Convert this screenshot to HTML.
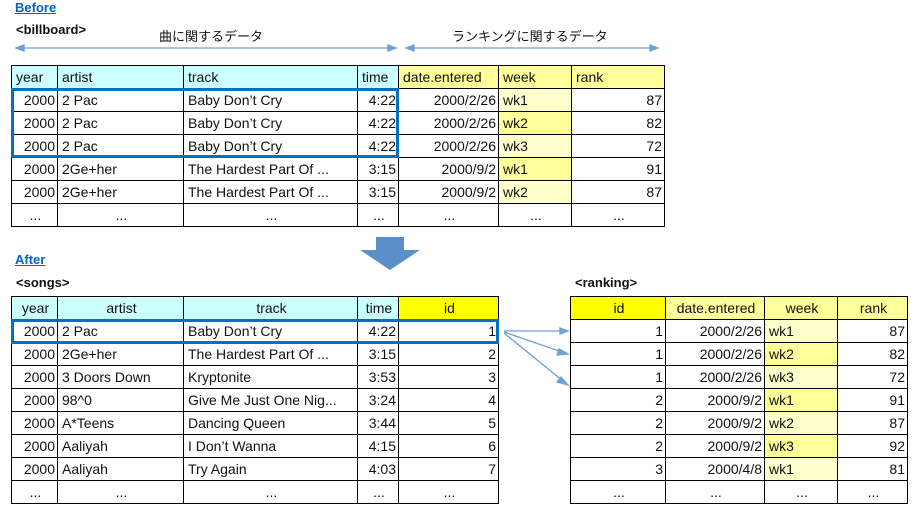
<!DOCTYPE html>
<html><head><meta charset="utf-8"><style>
body{margin:0;width:915px;height:517px;background:#fff;position:relative;overflow:hidden;font-family:"Liberation Sans","Noto Sans CJK JP",sans-serif;font-size:14px;color:#111}
.a{position:absolute}
table{position:absolute;border-collapse:collapse;table-layout:fixed}
td{border:1px solid #000;height:22px;padding:0 2px 0 4px;white-space:nowrap;overflow:hidden;line-height:22px}
.c{background:#ccffff}.y{background:#ffff00}.ly{background:#ffff99}.w1{background:#ffffcc}.w2{background:#ffff99}
.r{text-align:right}.m{text-align:center}
.h{font-weight:bold;color:#0563c1;text-decoration:underline;font-size:13px}
.b{font-weight:bold;font-size:13px}
.box{position:absolute;border:3px solid #0070c0;box-sizing:border-box}
</style></head><body>
<div class="a h" style="left:15px;top:0px">Before</div>
<div class="a b" style="left:16px;top:22px">&lt;billboard&gt;</div>
<div class="a" style="left:159px;top:26px;font-size:13px">曲に関するデータ</div>
<div class="a" style="left:452px;top:26px;font-size:13px">ランキングに関するデータ</div>
<div class="a h" style="left:15px;top:252px">After</div>
<div class="a b" style="left:16px;top:275px">&lt;songs&gt;</div>
<div class="a b" style="left:575px;top:275px">&lt;ranking&gt;</div>
<svg class="a" style="left:0;top:0" width="915" height="517">
<g stroke="#6fa0d6" stroke-width="1.3" fill="#6fa0d6">
<line x1="20" y1="48" x2="392" y2="48"/><polygon points="16,48 24,45 24,51"/><polygon points="396,48 388,45 388,51"/>
<line x1="410" y1="48" x2="654" y2="48"/><polygon points="406,48 414,45 414,51"/><polygon points="658,48 650,45 650,51"/>
<line x1="504" y1="331" x2="562" y2="331"/><polygon points="568,331 560,328 560,334"/>
<line x1="504" y1="332" x2="562" y2="352"/><polygon points="568,354 559,349 557,355"/>
<line x1="504" y1="333" x2="563" y2="381"/><polygon points="568,385 561,377 557,382"/>
</g>
<polygon points="376,237 404,237 404,250 420,250 390,270 360,250 376,250" fill="#5b8fc9"/>
</svg>
<table style="left:11px;top:65px">
<colgroup><col style="width:46px"><col style="width:126px"><col style="width:174px"><col style="width:41px"><col style="width:100px"><col style="width:73px"><col style="width:93px"></colgroup>
<tr><td class="c">year</td><td class="c">artist</td><td class="c">track</td><td class="c">time</td><td class="ly">date.entered</td><td class="ly">week</td><td class="ly">rank</td></tr>
<tr><td class="r">2000</td><td>2 Pac</td><td>Baby Don’t Cry</td><td class="r">4:22</td><td class="r">2000/2/26</td><td class="w1">wk1</td><td class="r">87</td></tr>
<tr><td class="r">2000</td><td>2 Pac</td><td>Baby Don’t Cry</td><td class="r">4:22</td><td class="r">2000/2/26</td><td class="w2">wk2</td><td class="r">82</td></tr>
<tr><td class="r">2000</td><td>2 Pac</td><td>Baby Don’t Cry</td><td class="r">4:22</td><td class="r">2000/2/26</td><td class="w1">wk3</td><td class="r">72</td></tr>
<tr><td class="r">2000</td><td>2Ge+her</td><td>The Hardest Part Of ...</td><td class="r">3:15</td><td class="r">2000/9/2</td><td class="w2">wk1</td><td class="r">91</td></tr>
<tr><td class="r">2000</td><td>2Ge+her</td><td>The Hardest Part Of ...</td><td class="r">3:15</td><td class="r">2000/9/2</td><td class="w1">wk2</td><td class="r">87</td></tr>
<tr><td class="m">...</td><td class="m">...</td><td class="m">...</td><td class="m">...</td><td class="m">...</td><td class="m">...</td><td class="m">...</td></tr>
</table>
<div class="box" style="left:11px;top:88px;width:388px;height:70px"></div>
<table style="left:11px;top:296px">
<colgroup><col style="width:46px"><col style="width:126px"><col style="width:174px"><col style="width:41px"><col style="width:100px"></colgroup>
<tr><td class="c m">year</td><td class="c m">artist</td><td class="c m">track</td><td class="c m">time</td><td class="y m">id</td></tr>
<tr><td class="r">2000</td><td>2 Pac</td><td>Baby Don’t Cry</td><td class="r">4:22</td><td class="r">1</td></tr>
<tr><td class="r">2000</td><td>2Ge+her</td><td>The Hardest Part Of ...</td><td class="r">3:15</td><td class="r">2</td></tr>
<tr><td class="r">2000</td><td>3 Doors Down</td><td>Kryptonite</td><td class="r">3:53</td><td class="r">3</td></tr>
<tr><td class="r">2000</td><td>98^0</td><td>Give Me Just One Nig...</td><td class="r">3:24</td><td class="r">4</td></tr>
<tr><td class="r">2000</td><td>A*Teens</td><td>Dancing Queen</td><td class="r">3:44</td><td class="r">5</td></tr>
<tr><td class="r">2000</td><td>Aaliyah</td><td>I Don’t Wanna</td><td class="r">4:15</td><td class="r">6</td></tr>
<tr><td class="r">2000</td><td>Aaliyah</td><td>Try Again</td><td class="r">4:03</td><td class="r">7</td></tr>
<tr><td class="m">...</td><td class="m">...</td><td class="m">...</td><td class="m">...</td><td class="m">...</td></tr>
</table>
<div class="box" style="left:11px;top:319px;width:488px;height:25px"></div>
<table style="left:570px;top:296px">
<colgroup><col style="width:95px"><col style="width:99px"><col style="width:73px"><col style="width:70px"></colgroup>
<tr><td class="y m">id</td><td class="ly m">date.entered</td><td class="ly m">week</td><td class="ly m">rank</td></tr>
<tr><td class="r">1</td><td class="r">2000/2/26</td><td class="w1">wk1</td><td class="r">87</td></tr>
<tr><td class="r">1</td><td class="r">2000/2/26</td><td class="w2">wk2</td><td class="r">82</td></tr>
<tr><td class="r">1</td><td class="r">2000/2/26</td><td class="w1">wk3</td><td class="r">72</td></tr>
<tr><td class="r">2</td><td class="r">2000/9/2</td><td class="w2">wk1</td><td class="r">91</td></tr>
<tr><td class="r">2</td><td class="r">2000/9/2</td><td class="w1">wk2</td><td class="r">87</td></tr>
<tr><td class="r">2</td><td class="r">2000/9/2</td><td class="w2">wk3</td><td class="r">92</td></tr>
<tr><td class="r">3</td><td class="r">2000/4/8</td><td class="w1">wk1</td><td class="r">81</td></tr>
<tr><td class="m">...</td><td class="m">...</td><td class="m">...</td><td class="m">...</td></tr>
</table>
</body></html>
